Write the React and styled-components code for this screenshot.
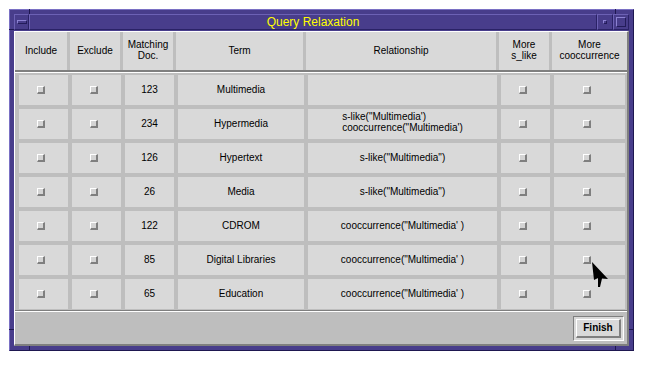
import React from "react";
import styled, { createGlobalStyle } from "styled-components";

const GlobalStyle = createGlobalStyle`
  body {
    margin: 0;
    background: #ffffff;
    font-family: "Liberation Sans", Arial, sans-serif;
  }
`;

const Stage = styled.div`
  padding: 9px 0 0 9px;
`;

const Window = styled.div`
  position: relative;
  box-sizing: border-box;
  width: 625px;
  height: 342px;
  padding: 4px;
  background: #483d8b;
  border: 1px solid;
  border-color: #7a70c4 #1e1750 #1e1750 #7a70c4;
  display: flex;
  flex-direction: column;
`;

const Notch = styled.span`
  position: absolute;
  background: #1e1750;
  ${p => (p.$vertical ? "width: 1px; height: 5px;" : "width: 5px; height: 1px;")}
`;

const TitleBar = styled.div`
  display: flex;
  height: 16px;
`;

const Bevel = styled.div`
  box-sizing: border-box;
  border: 1px solid;
  border-color: #6c61b4 #2a2266 #2a2266 #6c61b4;
  background: #483d8b;
  display: flex;
  align-items: center;
  justify-content: center;
`;

const MenuButton = styled(Bevel)`
  width: 15px;
`;

const Title = styled(Bevel)`
  flex: 1;
  color: #ffff00;
  font-size: 12px;
  line-height: 14px;
`;

const WinButton = styled(Bevel)`
  width: 16px;
`;

const Glyph = styled.span`
  box-sizing: border-box;
  display: block;
  width: ${p => p.$w}px;
  height: ${p => p.$h}px;
  border: 1px solid;
  border-color: #8c82d2 #231c5a #231c5a #8c82d2;
`;

const Content = styled.div`
  flex: 1;
  margin-top: 1px;
  background: #bebebe;
  border-left: 1px solid #ffffff;
  border-top: 1px solid #ffffff;
  border-right: 2px solid #7f7f7f;
  border-bottom: 2px solid #7f7f7f;
  display: flex;
  flex-direction: column;
`;

const HeaderGrid = styled.div`
  display: grid;
  grid-template-columns: 52px 50px 50px 127px 190px 50px 75px;
  column-gap: 3px;
  height: 38px;
`;

const HeaderCell = styled.div`
  background: #d9d9d9;
  display: flex;
  align-items: center;
  justify-content: center;
  text-align: center;
  font-size: 10px;
  line-height: 11px;
  color: #000;
  padding-bottom: 2px;
`;

const Separator = styled.div`
  border-top: ${p => p.$dark}px solid #7f7f7f;
  border-bottom: 1px solid #ffffff;
`;

const DataGrid = styled.div`
  display: grid;
  grid-template-columns: 49px 49px 49px 126px 189px 49px 71px;
  grid-auto-rows: 30px;
  gap: 4px;
  padding: 2px 0 1px 4px;
`;

const Cell = styled.div`
  background: #d9d9d9;
  display: flex;
  align-items: center;
  justify-content: center;
  font-size: 10px;
  line-height: 11px;
  color: #000;
  white-space: nowrap;
`;

const RelText = styled.div`
  text-align: left;
  padding-bottom: ${p => (p.$multi ? 4 : 2)}px;
`;

const Check = styled.span`
  box-sizing: border-box;
  width: 8px;
  height: 8px;
  margin-right: 5px;
  background: #d4d4d4;
  border-left: 1px solid #ffffff;
  border-top: 1px solid #ffffff;
  border-right: 2px solid #7f7f7f;
  border-bottom: 2px solid #7f7f7f;
`;

const Footer = styled.div`
  flex: 1;
  display: flex;
  align-items: center;
  justify-content: flex-end;
  padding-right: 3px;
`;

const FinishFrame = styled.div`
  box-sizing: border-box;
  width: 51px;
  height: 25px;
  padding: 2px;
  background: #d9d9d9;
  border: 1px solid;
  border-color: #7f7f7f #ffffff #ffffff #7f7f7f;
  display: flex;
`;

const FinishButton = styled.button`
  flex: 1;
  box-sizing: border-box;
  padding: 0;
  background: #d9d9d9;
  border-left: 1px solid #ffffff;
  border-top: 1px solid #ffffff;
  border-right: 2px solid #7f7f7f;
  border-bottom: 2px solid #7f7f7f;
  font-family: "Liberation Sans", Arial, sans-serif;
  font-size: 10px;
  font-weight: bold;
  color: #000;
`;

const Cursor = styled.svg`
  position: absolute;
  left: 581px;
  top: 251px;
`;

const headers = [
  "Include",
  "Exclude",
  ["Matching", "Doc."],
  "Term",
  "Relationship",
  ["More", "s_like"],
  ["More", "cooccurrence"],
];

const rows = [
  { doc: 123, term: "Multimedia", rel: [] },
  {
    doc: 234,
    term: "Hypermedia",
    rel: ["s-like(\"Multimedia')", "cooccurrence(\"Multimedia')"],
  },
  { doc: 126, term: "Hypertext", rel: ["s-like(\"Multimedia\")"] },
  { doc: 26, term: "Media", rel: ["s-like(\"Multimedia\")"] },
  { doc: 122, term: "CDROM", rel: ["cooccurrence(\"Multimedia' )"] },
  { doc: 85, term: "Digital Libraries", rel: ["cooccurrence(\"Multimedia' )"] },
  { doc: 65, term: "Education", rel: ["cooccurrence(\"Multimedia' )"] },
];

export default function App() {
  return (
    <Stage>
      <GlobalStyle />
      <Window>
        <Notch $vertical style={{ left: 19, top: -1 }} />
        <Notch style={{ left: -1, top: 19 }} />
        <Notch $vertical style={{ left: 19, bottom: -1 }} />
        <Notch style={{ left: -1, bottom: 20 }} />
        <Notch $vertical style={{ right: 17, top: -1 }} />
        <Notch style={{ right: -1, bottom: 20 }} />
        <Notch $vertical style={{ right: 17, bottom: -1 }} />
        <TitleBar>
          <MenuButton>
            <Glyph $w={10} $h={4} />
          </MenuButton>
          <Title>Query Relaxation</Title>
          <WinButton>
            <Glyph $w={4} $h={4} />
          </WinButton>
          <WinButton>
            <Glyph $w={10} $h={10} />
          </WinButton>
        </TitleBar>
        <Content>
          <HeaderGrid>
            {headers.map((h, i) => (
              <HeaderCell key={i}>
                {Array.isArray(h) ? (
                  <div>
                    {h[0]}
                    <br />
                    {h[1]}
                  </div>
                ) : (
                  h
                )}
              </HeaderCell>
            ))}
          </HeaderGrid>
          <Separator $dark={2} />
          <DataGrid>
            {rows.map(r => (
              <React.Fragment key={r.term}>
                <Cell>
                  <Check />
                </Cell>
                <Cell>
                  <Check />
                </Cell>
                <Cell>
                  <RelText>{r.doc}</RelText>
                </Cell>
                <Cell>
                  <RelText>{r.term}</RelText>
                </Cell>
                <Cell>
                  <RelText $multi={r.rel.length > 1}>
                    {r.rel.map((t, i) => (
                      <div key={i}>{t}</div>
                    ))}
                  </RelText>
                </Cell>
                <Cell>
                  <Check />
                </Cell>
                <Cell>
                  <Check />
                </Cell>
              </React.Fragment>
            ))}
          </DataGrid>
          <Separator $dark={1} />
          <Footer>
            <FinishFrame>
              <FinishButton>Finish</FinishButton>
            </FinishFrame>
          </Footer>
        </Content>
        <Cursor width="18" height="28" viewBox="0 0 18 28">
          <path d="M1 1 L17 18 L11 17.5 L9 26 L7 26 L7 17 L3 19 Z" fill="#000" />
        </Cursor>
      </Window>
    </Stage>
  );
}
